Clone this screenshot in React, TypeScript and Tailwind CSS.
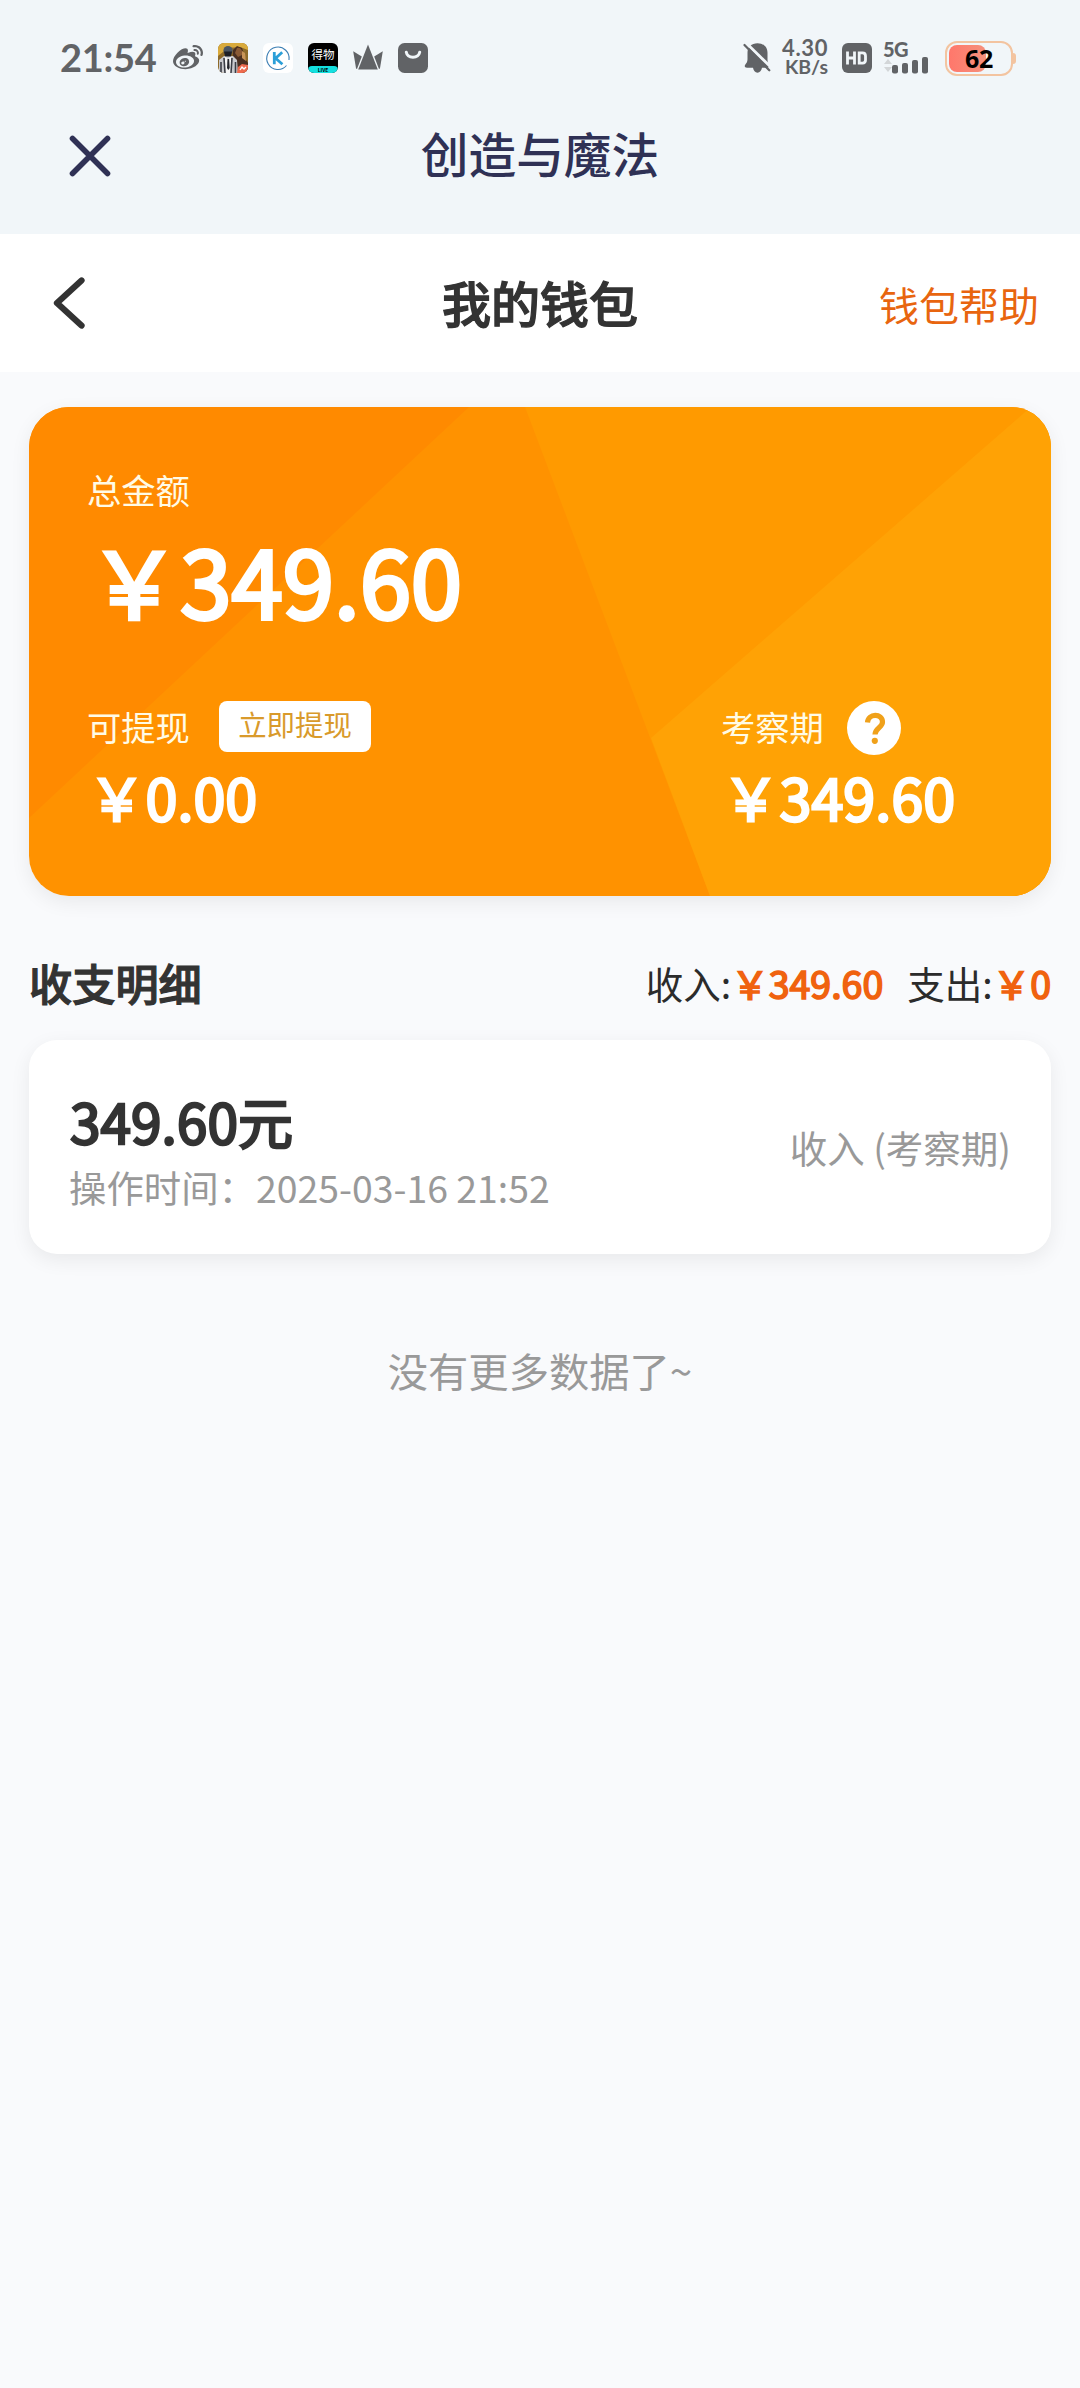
import { FaWeibo } from "react-icons/fa";

function GameIcon() {
  return (
    <svg viewBox="0 0 30 30" className="size-[30px] rounded-[6px]">
      <rect width="30" height="30" fill="#8d6a2a" />
      <path d="M0 0h30v7l-8-3-12 1-10 8z" fill="#d9aa3c" />
      <path d="M15 7l4-4 5 2 4 12 2 3v10H14z" fill="#4a2f20" />
      <path d="M19 5c4-1 6 3 5 7l-4 2-3-4z" fill="#8a5a35" />
      <path d="M24 8l3 2 1 8-4-3z" fill="#c89458" />
      <path d="M1 17l5-4h9l4 4 1 13H1z" fill="#c9cace" />
      <path d="M7 13l3 3 3-3 1 17H6z" fill="#f5f5f5" />
      <path d="M6 15l1 15M14 15l-1 15M3 19v11M17.500 19v11" stroke="#3b3d45" strokeWidth="1.600" />
      <path d="M9.500 16h1.600l.600 9-1.400 2-1.300-2z" fill="#25262c" />
      <circle cx="10" cy="7.500" r="4.600" fill="#4b5664" />
      <path d="M6 8.500h8l-1 5H7z" fill="#1d1f26" />
      <path d="M20 24l4-3 6 1v8H19z" fill="#ee6a4e" />
      <path d="M22 27l2-3 2 2 2-2" stroke="#fff" strokeWidth="1.300" fill="none" />
    </svg>
  );
}

function KIcon() {
  return (
    <svg viewBox="0 0 30 30" className="size-[30px]">
      <rect width="30" height="30" rx="6" fill="#fff" />
      <path d="M23.500 22.500A11.200 11.200 0 1 1 26 17" fill="none" stroke="#3c7fb4" strokeWidth="1.100" />
      <path d="M11.300 9v12.200M19.200 9.200l-6.600 6 6.800 6" fill="none" stroke="#2b9fd8" strokeWidth="2.800" />
    </svg>
  );
}

function DewuIcon() {
  return (
    <div className="flex size-[30px] flex-col overflow-hidden rounded-[6px] bg-black text-center font-['Noto_Sans_CJK_SC',sans-serif]">
      <div className="h-[23px] text-[11.5px] leading-[23px] font-normal text-white">得物</div>
      <div className="h-[7px] rounded-t-[4px] bg-[#14e0e0] text-[5px] leading-[7px] font-bold text-black">LIVE</div>
    </div>
  );
}

function CrownIcon() {
  return (
    <svg viewBox="0 0 30 30" className="size-[30px]" fill="#616366">
      <path d="M15 1.500L24.800 26.500H5.200z" />
      <path d="M.2 8.200l8.600 5.400-4.700 12.200h-1z" />
      <path d="M29.800 8.200l-8.600 5.400 4.700 12.200h1z" />
    </svg>
  );
}

function BagIcon() {
  return (
    <svg viewBox="0 0 30 30" className="size-[30px]">
      <rect width="30" height="30" rx="6.500" fill="#616366" />
      <path d="M8.300 9.200c1.300 6.600 12 6.600 13.400 0" fill="none" stroke="#f1f6f9" strokeWidth="3" strokeLinecap="round" />
    </svg>
  );
}

function BellOffIcon() {
  return (
    <svg viewBox="0 0 28 32" className="h-[32px] w-[28px]">
      <path
        d="M14.500 1.200C20.500 1.200 24.500 5 24.500 10.800V18c0 2.500 1.500 4 1.500 6 0 1.200-.8 1.800-2 1.800h-5c-.6 2.800-2.200 5-4.500 5s-4-2.200-4.500-5H4c-2.200 0-2.800-1.600-1.800-3 1.200-1.500 2.300-3 2.300-5.500v-6.500c0-5.800 4-9.600 10-9.600z"
        fill="#616366"
      />
      <path d="M3.200 1l26 25.500" stroke="#f1f6f9" strokeWidth="2.800" />
      <path d="M1.500 3l24.800 25.300" stroke="#616366" strokeWidth="2.200" strokeLinecap="round" />
    </svg>
  );
}

function HdIcon() {
  return (
    <svg viewBox="0 0 30 30" className="size-[30px]">
      <rect width="30" height="30" rx="6" fill="#616366" />
      <path d="M5.500 8.500v13M12.500 8.500v13M5.500 15h7" stroke="#f1f6f9" strokeWidth="2.800" fill="none" />
      <path d="M17.200 9.900h3.300q3 0 3 3v4.200q0 3-3 3h-3.300z" stroke="#f1f6f9" strokeWidth="2.800" fill="none" />
    </svg>
  );
}

function Signal() {
  return (
    <div className="flex h-[32px] w-[46px] flex-col">
      <span className="h-[15px] text-[20px] leading-[15px] font-black tracking-[-0.5px]">5G</span>
      <svg viewBox="0 0 46 18" className="-mt-px h-[18px] w-[46px]" fill="#616366">
        <path d="M1 8l4-5 4 5zM1 11l4 5 4-5z" fill="#d3d6d8" />
        <rect x="9" y="9" width="6" height="8.500" rx="2" />
        <rect x="19" y="7" width="6" height="10.500" rx="2" />
        <rect x="29" y="4" width="6" height="13.500" rx="2" />
        <rect x="39" y="1" width="6" height="16.500" rx="2" />
      </svg>
    </div>
  );
}

function Battery() {
  return (
    <div className="flex items-center">
      <div className="relative flex h-[35px] w-[68px] items-center rounded-[12px] border-2 border-[#f3c4a0] p-[2px]">
        <div className="h-[27px] w-[37px] rounded-[8px] bg-gradient-to-r from-[#ff776b] to-[#f5907c]" />
        <span className="absolute inset-0 text-center font-['Open_Sans',sans-serif] text-[25px] leading-[30px] font-bold tracking-[-0.300px] text-black">62</span>
      </div>
      <div className="h-[11px] w-[3px] rounded-r-[3px] bg-[#f3c4a0]" />
    </div>
  );
}

function StatusBar() {
  return (
    <div className="flex h-[116px] items-center pr-[64px] pl-[60px] font-['Lato',sans-serif] text-[#616366]">
      <span className="w-[113px] pb-[3px] text-[38px] leading-[40px] font-bold tracking-[-0.300px]">21:54</span>
      <div className="flex items-center gap-[15px]">
        <FaWeibo className="size-[30px]" />
        <GameIcon />
        <KIcon />
        <DewuIcon />
        <CrownIcon />
        <BagIcon />
      </div>
      <div className="ml-auto flex items-center">
        <BellOffIcon />
        <div className="ml-[9px] flex w-[48px] flex-col items-end pb-[3px] font-bold">
          <span className="text-[22px] leading-[20px] tracking-[0.600px]">4.30</span>
          <span className="text-[19.500px] leading-[17px]">KB/s</span>
        </div>
        <div className="ml-[14px]">
          <HdIcon />
        </div>
        <div className="ml-[11px]">
          <Signal />
        </div>
        <div className="ml-[16px]">
          <Battery />
        </div>
      </div>
    </div>
  );
}

function AppBar() {
  return (
    <div className="grid h-[118px] grid-cols-[120px_1fr_120px] pt-[11px] pr-[69px] pl-[69px]">
      <svg viewBox="0 0 42 42" className="mt-[8px] size-[42px]">
        <path d="M3.500 3.500l35 35M38.500 3.500L3.500 38.500" stroke="#2f3155" strokeWidth="5.600" strokeLinecap="round" />
      </svg>
      <h1 className="text-center text-[47.700px] leading-[52px] font-medium text-[#2f3155]">创造与魔法</h1>
    </div>
  );
}

function PageHeader() {
  return (
    <header className="grid h-[138px] grid-cols-[200px_1fr_200px] items-center bg-white pr-[41px] pl-[51px]">
      <svg viewBox="0 0 36 54" className="h-[54px] w-[36px]">
        <path d="M30.500 4.500L6 27L30.500 49.500" fill="none" stroke="#333" strokeWidth="6.300" strokeLinecap="round" strokeLinejoin="round" />
      </svg>
      <h2 className="pr-[10px] pb-[2px] text-center text-[49px] leading-[60px] font-medium text-[#333] [-webkit-text-stroke:1.300px_#333]">我的钱包</h2>
      <a className="pt-[2px] text-right text-[40px] leading-[60px] text-[#e8650f]">钱包帮助</a>
    </header>
  );
}

function BalanceCard() {
  return (
    <section className="relative h-[489px] overflow-hidden rounded-[40px] bg-[#ff9200] text-white">
      <svg viewBox="0 0 1022 489" className="absolute inset-0 h-full w-full">
        <path d="M0 0H440L0 411z" fill="#ff8a00" />
        <path d="M496 0H1022V489H681z" fill="#ff9a00" />
        <path d="M1002 0H1022V489H681L622 331z" fill="#ffa205" />
      </svg>
      <div className="relative flex h-full flex-col pt-[57px] pl-[58px]">
        <div className="text-[34.300px] leading-[50px] text-[#fffbe6]">总金额</div>
        <div className="mt-[5px] ml-px text-[92.300px] leading-[120px] font-normal [-webkit-text-stroke:3.800px_white]">￥349.60</div>
        <div className="mt-[62px] grid grid-cols-[635px_1fr]">
          <div>
            <div className="flex h-[54px] items-start">
              <span className="w-[132px] text-[34.300px] leading-[51px] text-[#fffbe6]">可提现</span>
              <button className="h-[51px] w-[152px] rounded-[8px] bg-white pb-[5px] text-[28.400px] leading-[46px] text-[#d99a2b]">立即提现</button>
            </div>
            <div className="-mt-[3px] ml-px text-[57.500px] leading-[88px] font-normal [-webkit-text-stroke:2.600px_white]">￥0.00</div>
          </div>
          <div className="ml-[-1px]">
            <div className="flex h-[54px] items-start">
              <span className="w-[126px] text-[34.300px] leading-[51px] text-[#fffbe6]">考察期</span>
              <svg viewBox="0 0 54 54" className="size-[54px]">
                <circle cx="27" cy="27" r="27" fill="#fff" />
                <path d="M20.500 21.500C21 12 35.500 12 35.500 21c0 5.500-7.500 6-7.500 12.500" fill="none" stroke="#f0a11a" strokeWidth="5.200" />
                <circle cx="27.800" cy="39.800" r="3.100" fill="#f0a11a" />
              </svg>
            </div>
            <div className="-mt-[3px] ml-px text-[57.500px] leading-[88px] font-normal [-webkit-text-stroke:2.600px_white]">￥349.60</div>
          </div>
        </div>
      </div>
    </section>
  );
}

function Summary() {
  return (
    <div className="flex h-[144px] items-center justify-between pt-[27px]">
      <h3 className="text-[43.200px] leading-[60px] font-medium text-[#333] [-webkit-text-stroke:1.200px_#333]">收支明细</h3>
      <div className="flex pt-[3px] text-[37.500px] leading-[60px] text-[#2b2b2b]">
        <span>收入:</span>
        <span className="text-[#f0620f] [-webkit-text-stroke:1.700px_#f0620f]">￥349.60</span>
        <span className="ml-[24px]">支出:</span>
        <span className="text-[#f0620f] [-webkit-text-stroke:1.700px_#f0620f]">￥0</span>
      </div>
    </div>
  );
}

function RecordCard() {
  return (
    <article className="flex h-[214px] items-center justify-between rounded-[28px] bg-white px-[40px] shadow-[0_6px_20px_rgba(0,0,0,0.07)]">
      <div>
        <div className="ml-px pt-[4px] text-[55px] leading-[70px] font-normal text-[#333] [-webkit-text-stroke:2.400px_#333]">349.60元</div>
        <div className="pt-[5px] text-[37.400px] leading-[54px] text-[#999]">操作时间：2025-03-16 21:52</div>
      </div>
      <div className="text-[37.500px] leading-[54px] text-[#999]">收入 (考察期)</div>
    </article>
  );
}

export default function App() {
  return (
    <div className="min-h-[2388px] w-[1080px] bg-[#f9fafc] font-['Noto_Sans_CJK_SC',sans-serif]">
      <div className="bg-[#f1f6f9]">
        <StatusBar />
        <AppBar />
      </div>
      <PageHeader />
      <main className="px-[29px] pt-[35px]">
        <div className="rounded-[40px] shadow-[0_6px_20px_rgba(0,0,0,0.07)]">
          <BalanceCard />
        </div>
        <Summary />
        <RecordCard />
        <p className="mt-[86px] text-center text-[40.300px] leading-[60px] text-[#999]">没有更多数据了~</p>
      </main>
    </div>
  );
}
